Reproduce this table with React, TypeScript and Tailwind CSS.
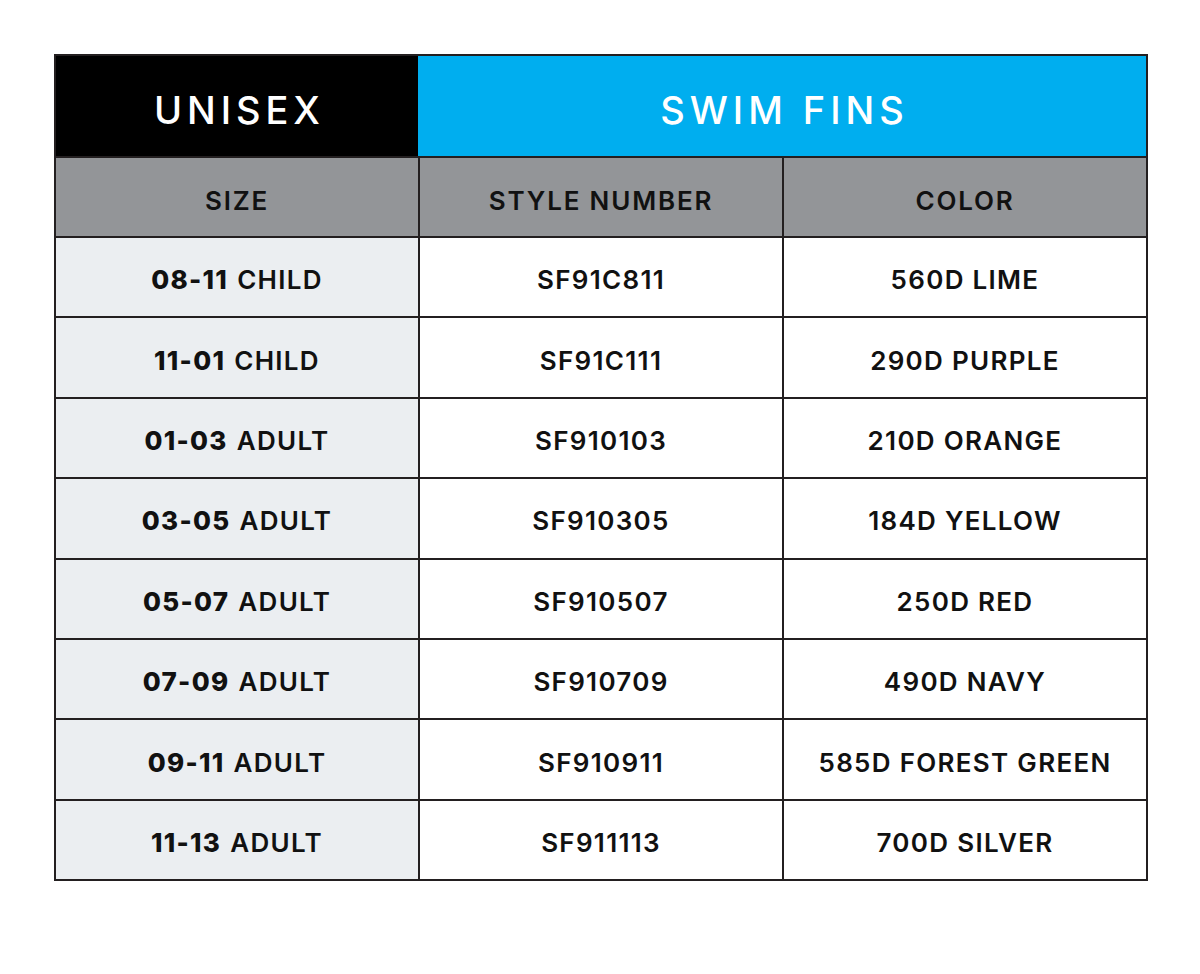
import React from "react";

const rows = [
  ["08-11", "CHILD", "SF91C811", "560D LIME"],
  ["11-01", "CHILD", "SF91C111", "290D PURPLE"],
  ["01-03", "ADULT", "SF910103", "210D ORANGE"],
  ["03-05", "ADULT", "SF910305", "184D YELLOW"],
  ["05-07", "ADULT", "SF910507", "250D RED"],
  ["07-09", "ADULT", "SF910709", "490D NAVY"],
  ["09-11", "ADULT", "SF910911", "585D FOREST GREEN"],
  ["11-13", "ADULT", "SF911113", "700D SILVER"],
];

export default function App() {
  return (
    <div
      className="w-[1200px] h-[974px] bg-white pt-[54px] pl-[54px]"
      style={{ fontFamily: "Inter, 'DejaVu Sans', sans-serif" }}
    >
      <div className="w-[1094px] bg-[#231f20] p-[2px] grid grid-cols-[362px_362px_362px] gap-[2px]">
        <div className="h-[100px] bg-black flex items-center justify-center pt-[9px] text-white text-[38px] font-medium tracking-[0.13em] pl-[0.13em]">
          UNISEX
        </div>
        <div className="col-span-2 -ml-[2px] h-[100px] bg-[#00aeef] flex items-center justify-center pt-[9px] text-white text-[38px] font-medium tracking-[0.13em] pl-[0.13em]">
          SWIM FINS
        </div>
        {["SIZE", "STYLE NUMBER", "COLOR"].map((h) => (
          <div
            key={h}
            className="h-[78px] bg-[#939598] flex items-center justify-center pt-[6px] text-[#111] text-[26px] font-semibold tracking-[0.07em]"
          >
            {h}
          </div>
        ))}
        {rows.map((r) => (
          <React.Fragment key={r[2]}>
            <div className="h-[78.4px] bg-[#ebeef1] flex items-center justify-center pt-[5px] text-[#111] text-[26px] font-semibold tracking-[0.05em]">
              <span className="font-extrabold mr-[9px]">{r[0]}</span>
              {r[1]}
            </div>
            <div className="h-[78.4px] bg-white flex items-center justify-center pt-[5px] text-[#111] text-[26px] font-semibold tracking-[0.05em]">
              {r[2]}
            </div>
            <div className="h-[78.4px] bg-white flex items-center justify-center pt-[5px] text-[#111] text-[26px] font-semibold tracking-[0.05em]">
              {r[3]}
            </div>
          </React.Fragment>
        ))}
      </div>
    </div>
  );
}
